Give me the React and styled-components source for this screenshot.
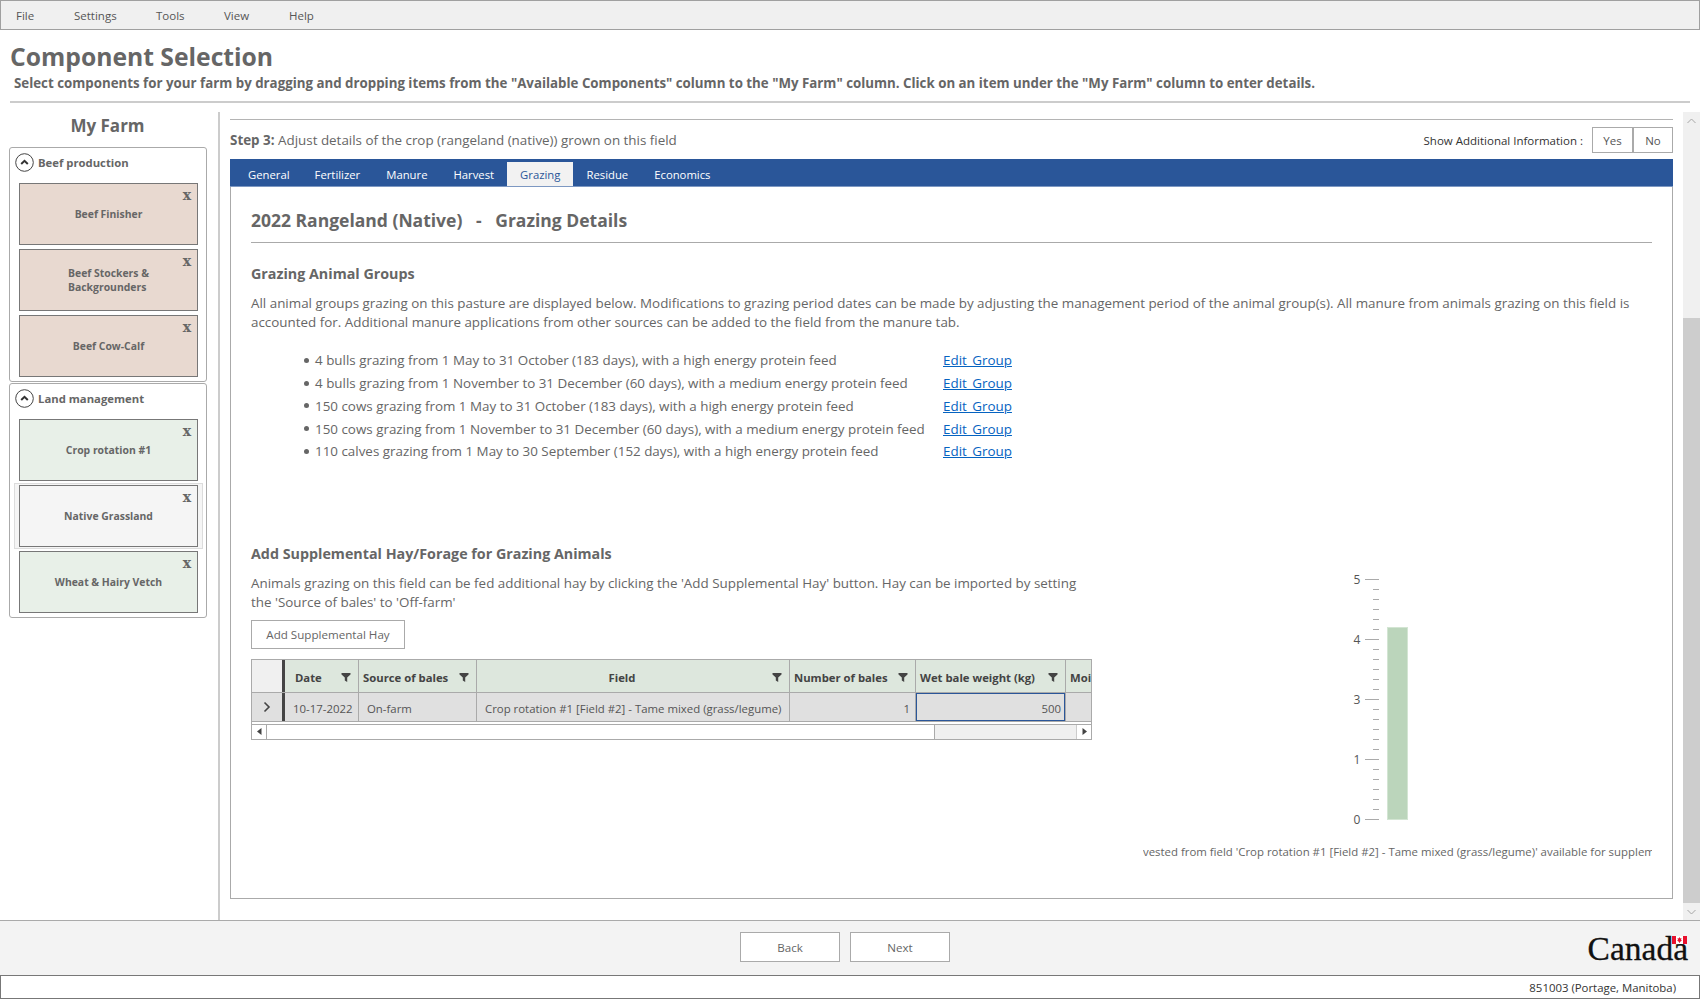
import React from 'react'
import styled, { createGlobalStyle } from 'styled-components'

const GlobalStyle = createGlobalStyle`
  html, body { margin: 0; padding: 0; background: #fff; }
  body { font-family: "Open Sans", "Noto Sans", sans-serif; color: #666; overflow: hidden; }
  * { box-sizing: border-box; }
`

const Page = styled.div`
  width: 1700px;
  height: 999px;
  display: flex;
  flex-direction: column;
  background: #fff;
`

const MenuBar = styled.div`
  height: 30px;
  flex: none;
  display: flex;
  align-items: center;
  background: #f0f0f0;
  border: 1px solid #a0a0a0;
  font-size: 11.5px;
  color: #555;
`
const MenuItem = styled.span`
  width: ${p => p.$w}px;
  &:first-child { margin-left: 15px; }
`

const Header = styled.div`
  height: 73px;
  flex: none;
  margin: 0 10px 9px;
  border-bottom: 2px solid #ccc;
  padding-top: 9px;
`
const Title = styled.h1`
  margin: 0;
  font-size: 24.7px;
  line-height: 35px;
  font-weight: 700;
  color: #666;
`
const Subtitle = styled.p`
  margin: 0 0 0 4px;
  font-size: 13.3px;
  line-height: 18px;
  font-weight: 700;
  color: #666;
  white-space: nowrap;
`

const Main = styled.div`
  height: 808px;
  flex: none;
  display: flex;
`

const Sidebar = styled.div`
  width: 220px;
  flex: none;
  border-right: 2px solid #ccc;
  padding-left: 9px;
`
const SideTitle = styled.h2`
  width: 197px;
  margin: 0;
  height: 35px;
  font-size: 17px;
  line-height: 27px;
  text-align: center;
  font-weight: 700;
  color: #666;
`
const Group = styled.div`
  width: 198px;
  border: 1px solid #aaa;
  border-radius: 3px;
  margin-bottom: 1px;
  padding: 5px 0 4px;
`
const GroupHead = styled.div`
  height: 19px;
  display: flex;
  align-items: center;
  gap: 4px;
  padding-left: 5px;
  margin-bottom: 11px;
  font-size: 11.3px;
  font-weight: 700;
  color: #666;
`
const CardList = styled.div`
  display: flex;
  flex-direction: column;
  gap: 4px;
  padding-left: 9px;
`
const CardHalo = styled.div`
  width: ${p => (p.$selected ? '189px' : '179px')};
  margin: ${p => (p.$selected ? '-2px 0 -2px -5px' : '0')};
  padding: ${p => (p.$selected ? '1px 4px' : '0')};
  background: ${p => (p.$selected ? '#f5f5f5' : 'transparent')};
  border: ${p => (p.$selected ? '1px solid #dcdcdc' : 'none')};
`
const Card = styled.div`
  position: relative;
  width: 179px;
  height: 62px;
  display: flex;
  align-items: center;
  justify-content: center;
  background: ${p => p.$bg};
  border: 1px solid #777;
  font-size: 10.4px;
  line-height: 14px;
  font-weight: 700;
  color: #666;
`
const CardClose = styled.span`
  position: absolute;
  top: 3px;
  right: 6px;
  font-family: "DejaVu Serif", serif;
  font-size: 14px;
  line-height: 16px;
  font-weight: 700;
  color: #666;
`

const Panel = styled.div`
  flex: 1;
  min-width: 0;
  padding: 7px 27px 0 10px;
  display: flex;
  flex-direction: column;
`
const TopRule = styled.div`
  height: 1px;
  background: #b4b4b4;
  flex: none;
`
const StepRow = styled.div`
  height: 39px;
  flex: none;
  display: flex;
  align-items: center;
  padding-top: 1px;
  font-size: 13.4px;
`
const StepText = styled.div`
  flex: 1;
  b { font-weight: 700; }
`
const InfoLabel = styled.span`
  font-size: 11.5px;
  color: #333;
  margin-right: 9px;
`
const ToggleBtn = styled.div`
  width: ${p => p.$w}px;
  height: 26px;
  display: flex;
  align-items: center;
  justify-content: center;
  border: 1px solid #aaa;
  font-size: 11.5px;
  color: #555;
`
const TabBar = styled.div`
  height: 28px;
  flex: none;
  display: flex;
  align-items: flex-end;
  background: #2a5699;
  padding-left: 6px;
  border-bottom: 1px solid #7d98c2;
`
const Tab = styled.div`
  height: 24px;
  padding: 0 ${p => p.$pad}px;
  display: flex;
  align-items: center;
  font-size: 11.3px;
  color: ${p => (p.$active ? '#2a5699' : '#fff')};
  background: ${p => (p.$active ? '#f2f2f2' : 'transparent')};
`
const ContentBox = styled.div`
  height: 712px;
  flex: none;
  border: 1px solid #aaa;
  border-top: none;
  padding: 18px 20px 0 20px;
`
const BoxTitle = styled.h3`
  margin: 0;
  height: 38px;
  border-bottom: 1px solid #aaa;
  font-size: 17.5px;
  line-height: 31px;
  font-weight: 700;
  color: #666;
  white-space: pre;
`
const SectionTitle = styled.h4`
  margin: ${p => p.$mt}px 0 0;
  font-size: 14.3px;
  line-height: 20px;
  font-weight: 700;
  color: #666;
`
const Para = styled.p`
  margin: ${p => p.$mt}px 0 0;
  width: ${p => p.$w};
  font-size: 13.4px;
  line-height: 19px;
  color: #666;
`
const GroupList = styled.ul`
  list-style: none;
  margin: 17px 0 0;
  padding: 0 0 0 53px;
`
const GroupRow = styled.li`
  height: 22.75px;
  display: flex;
  align-items: center;
  font-size: 13.4px;
  color: #666;
  &::before {
    content: '';
    width: 5px;
    height: 5px;
    border-radius: 50%;
    background: #666;
    margin-right: 6px;
    flex: none;
  }
`
const GroupText = styled.span`
  width: 628px;
  white-space: nowrap;
`
const EditLink = styled.a`
  color: #0563c1;
  text-decoration: underline;
  font-size: 13.4px;
  word-spacing: 2px;
`
const Lower = styled.div`
  display: grid;
  grid-template-columns: 841px 1fr;
`
const AddButton = styled.div`
  width: 154px;
  height: 29px;
  margin-top: 8px;
  display: flex;
  align-items: center;
  justify-content: center;
  border: 1px solid #aaa;
  font-size: 11.6px;
  color: #666;
`
const GridWrap = styled.div`
  width: 841px;
  height: 81px;
  margin-top: 10px;
  border: 1px solid #aaa;
  overflow: hidden;
`
const GridRow = styled.div`
  display: grid;
  grid-template-columns: 30px 3px 74px 118px 313px 126px 150px 26px;
  height: ${p => p.$h}px;
  border-bottom: 1px solid #aaa;
`
const HeadCell = styled.div`
  position: relative;
  display: flex;
  align-items: center;
  justify-content: ${p => p.$align || 'flex-start'};
  padding: 3px ${p => p.$pr || 0}px 0 ${p => p.$pl || 4}px;
  background: #dde7dd;
  border-right: ${p => (p.$last ? 'none' : '1px solid #aaa')};
  font-size: 11.3px;
  font-weight: 700;
  color: #444;
  white-space: nowrap;
  overflow: hidden;
`
const FunnelSlot = styled.span`
  position: absolute;
  right: ${p => p.$r || 7}px;
  top: 12px;
  display: flex;
`
const Corner = styled.div`
  background: ${p => p.$bg};
  display: flex;
  align-items: center;
  justify-content: center;
`
const BlackBar = styled.div`
  background: #444;
`
const BodyCell = styled.div`
  display: flex;
  align-items: center;
  justify-content: ${p => p.$align || 'flex-start'};
  padding: 3px ${p => p.$pr || 0}px 0 ${p => p.$pl || 0}px;
  background: #e0e0e0;
  border-right: ${p => (p.$last ? 'none' : '1px solid #aaa')};
  box-shadow: ${p => (p.$focus ? 'inset 0 0 0 1px #2a5699' : 'none')};
  font-size: 11.4px;
  color: #555;
  white-space: nowrap;
  overflow: hidden;
`
const HScroll = styled.div`
  height: 15px;
  margin-top: 2px;
  border-top: 1px solid #aaa;
  display: flex;
  background: #f0f0f0;
`
const ScrollArrow = styled.div`
  width: ${p => p.$w}px;
  flex: none;
  display: flex;
  align-items: center;
  justify-content: center;
  background: #fff;
  ${p => p.$right && 'border-left: 1px solid #ccc; margin-left: auto;'}
`
const ScrollThumb = styled.div`
  width: 669px;
  background: #fff;
  border: 1px solid #aaa;
  border-width: 0 1px;
`
const GaugeCol = styled.div`
  min-width: 0;
  padding-left: 51px;
  padding-top: 5px;
`
const GaugeSvg = styled.svg`
  display: block;
  margin-left: 206px;
`
const GaugeCaption = styled.div`
  margin-top: 13px;
  width: 509px;
  overflow: hidden;
  white-space: nowrap;
  font-size: 11.42px;
  line-height: 16px;
  color: #666;
`

const PageScroll = styled.div`
  position: absolute;
  left: 1683px;
  top: 112px;
  width: 17px;
  height: 808px;
  background: #f0f0f0;
`
const PageThumb = styled.div`
  position: absolute;
  top: 206px;
  left: 0;
  width: 17px;
  height: 585px;
  background: #cdcdcd;
`
const ArrowSlot = styled.div`
  position: absolute;
  left: 4px;
  ${p => (p.$bottom ? 'bottom: 5px;' : 'top: 6px;')}
  display: flex;
`

const Footer = styled.div`
  height: 55px;
  flex: none;
  position: relative;
  display: flex;
  justify-content: center;
  align-items: center;
  gap: 10px;
  background: #f3f3f3;
  border-top: 1px solid #aaa;
  padding: 0 10px 2px 0;
`
const NavButton = styled.div`
  width: 100px;
  height: 30px;
  display: flex;
  align-items: center;
  justify-content: center;
  background: #fff;
  border: 1px solid #aaa;
  font-size: 11.6px;
  color: #666;
`
const Wordmark = styled.div`
  position: absolute;
  right: 12px;
  top: 10px;
  font-family: "Liberation Serif", serif;
  font-size: 33.5px;
  line-height: 36px;
  color: #111;
  -webkit-text-stroke: 0.3px #111;
`
const FlagSvg = styled.svg`
  position: absolute;
  right: 1px;
  top: 5px;
`
const StatusBar = styled.div`
  height: 24px;
  flex: none;
  display: flex;
  align-items: center;
  justify-content: flex-end;
  padding-right: 23px;
  background: #fff;
  border: 1px solid #777;
  font-size: 11.4px;
  color: #333;
`

const CollapseIcon = () => (
  <svg width="19" height="19" viewBox="0 0 19 19">
    <circle cx="9.5" cy="9.5" r="8.8" fill="none" stroke="#444" strokeWidth="1" />
    <path d="M6.2 11 9.5 7.8 12.8 11" fill="none" stroke="#333" strokeWidth="2" />
  </svg>
)

const Funnel = () => (
  <svg width="10" height="10" viewBox="0 0 10 10">
    <path d="M0.5 1h9v1.4L6.2 5.4V10L3.8 8.6V5.4L0.5 2.4z" fill="#444" />
  </svg>
)

const Chevron = ({ up }) => (
  <svg width="9" height="6" viewBox="0 0 9 6">
    <path d={up ? 'M.5 5 4.5 1 8.5 5' : 'M.5 1 4.5 5 8.5 1'} fill="none" stroke="#a6a6a6" strokeWidth="1" />
  </svg>
)

const Gauge = () => {
  const labels = ['5', '4', '3', '1', '0']
  return (
    <GaugeSvg width="60" height="262" viewBox="0 0 60 262">
      {[...Array(25).keys()].map(i => {
        const y = 10.5 + i * 10
        const major = i % 6 === 0
        return <line key={i} x1={major ? 16 : 24} x2="30" y1={y} y2={y} stroke="#aaa" strokeWidth="1" />
      })}
      {labels.map((l, i) => (
        <text key={l} x="8" y={15 + i * 60} textAnchor="middle" fontSize="12" fill="#555" fontFamily="Open Sans, sans-serif">{l}</text>
      ))}
      <rect x="38.5" y="58.5" width="20" height="192" fill="#bbd5bb" stroke="#d3e5d3" strokeWidth="1" />
    </GaugeSvg>
  )
}

const beef = ['Beef Finisher', 'Beef Stockers &|Backgrounders', 'Beef Cow-Calf']
const land = [
  { name: 'Crop rotation #1', bg: '#e8f0e8' },
  { name: 'Native Grassland', bg: '#f5f5f5', selected: true },
  { name: 'Wheat & Hairy Vetch', bg: '#e8f0e8' },
]
const groups = [
  '4 bulls grazing from 1 May to 31 October (183 days), with a high energy protein feed',
  '4 bulls grazing from 1 November to 31 December (60 days), with a medium energy protein feed',
  '150 cows grazing from 1 May to 31 October (183 days), with a high energy protein feed',
  '150 cows grazing from 1 November to 31 December (60 days), with a medium energy protein feed',
  '110 calves grazing from 1 May to 30 September (152 days), with a high energy protein feed',
]
const tabs = [
  ['General', 12], ['Fertilizer', 13], ['Manure', 13], ['Harvest', 13],
  ['Grazing', 13, true], ['Residue', 13], ['Economics', 13],
]

export default function App() {
  return (
    <Page>
      <GlobalStyle />
      <MenuBar>
        <MenuItem $w={58}>File</MenuItem>
        <MenuItem $w={82}>Settings</MenuItem>
        <MenuItem $w={68}>Tools</MenuItem>
        <MenuItem $w={65}>View</MenuItem>
        <MenuItem $w={40}>Help</MenuItem>
      </MenuBar>
      <Header>
        <Title>Component Selection</Title>
        <Subtitle>Select components for your farm by dragging and dropping items from the "Available Components" column to the "My Farm" column. Click on an item under the "My Farm" column to enter details.</Subtitle>
      </Header>
      <Main>
        <Sidebar>
          <SideTitle>My Farm</SideTitle>
          <Group>
            <GroupHead><CollapseIcon />Beef production</GroupHead>
            <CardList>
              {beef.map(n => (
                <Card key={n} $bg="#e8d9d0">
                  <CardClose>x</CardClose>
                  <span>{n.split('|').map(s => <div key={s}>{s}</div>)}</span>
                </Card>
              ))}
            </CardList>
          </Group>
          <Group>
            <GroupHead><CollapseIcon />Land management</GroupHead>
            <CardList>
              {land.map(c => (
                <CardHalo key={c.name} $selected={c.selected}>
                  <Card $bg={c.bg}>
                    <CardClose>x</CardClose>
                    {c.name}
                  </Card>
                </CardHalo>
              ))}
            </CardList>
          </Group>
        </Sidebar>
        <Panel>
          <TopRule />
          <StepRow>
            <StepText><b>Step 3:</b> Adjust details of the crop (rangeland (native)) grown on this field</StepText>
            <InfoLabel>Show Additional Information :</InfoLabel>
            <ToggleBtn $w={41}>Yes</ToggleBtn>
            <ToggleBtn $w={40}>No</ToggleBtn>
          </StepRow>
          <TabBar>
            {tabs.map(([t, pad, active]) => <Tab key={t} $pad={pad} $active={active}>{t}</Tab>)}
          </TabBar>
          <ContentBox>
            <BoxTitle>2022 Rangeland (Native)   -   Grazing Details</BoxTitle>
            <SectionTitle $mt={21}>Grazing Animal Groups</SectionTitle>
            <Para $mt={10}>All animal groups grazing on this pasture are displayed below. Modifications to grazing period dates can be made by adjusting the management period of the animal group(s). All manure from animals grazing on this field is accounted for. Additional manure applications from other sources can be added to the field from the manure tab.</Para>
            <GroupList>
              {groups.map(g => (
                <GroupRow key={g}>
                  <GroupText>{g}</GroupText>
                  <EditLink href="#">Edit Group</EditLink>
                </GroupRow>
              ))}
            </GroupList>
            <SectionTitle $mt={81}>Add Supplemental Hay/Forage for Grazing Animals</SectionTitle>
            <Lower>
              <div>
                <Para $mt={10} $w="840px">Animals grazing on this field can be fed additional hay by clicking the 'Add Supplemental Hay' button. Hay can be imported by setting the 'Source of bales' to 'Off-farm'</Para>
                <AddButton>Add Supplemental Hay</AddButton>
                <GridWrap>
                  <GridRow $h={33}>
                    <Corner $bg="#f0f0f0" />
                    <BlackBar />
                    <HeadCell $pl={10}>Date<FunnelSlot><Funnel /></FunnelSlot></HeadCell>
                    <HeadCell>Source of bales<FunnelSlot><Funnel /></FunnelSlot></HeadCell>
                    <HeadCell $align="center" $pr={26}>Field<FunnelSlot><Funnel /></FunnelSlot></HeadCell>
                    <HeadCell>Number of bales<FunnelSlot><Funnel /></FunnelSlot></HeadCell>
                    <HeadCell>Wet bale weight (kg)<FunnelSlot><Funnel /></FunnelSlot></HeadCell>
                    <HeadCell $last>Moisture</HeadCell>
                  </GridRow>
                  <GridRow $h={29}>
                    <Corner $bg="#e0e0e0">
                      <svg width="8" height="12" viewBox="0 0 8 12">
                        <path d="M1.5 1.5 6 6 1.5 10.5" fill="none" stroke="#444" strokeWidth="1.6" />
                      </svg>
                    </Corner>
                    <BlackBar />
                    <BodyCell $pl={8}>10-17-2022</BodyCell>
                    <BodyCell $pl={8}>On-farm</BodyCell>
                    <BodyCell $pl={8}>Crop rotation #1 [Field #2] - Tame mixed (grass/legume)</BodyCell>
                    <BodyCell $align="flex-end" $pr={5}>1</BodyCell>
                    <BodyCell $align="flex-end" $pr={4} $focus>500</BodyCell>
                    <BodyCell $last />
                  </GridRow>
                  <HScroll>
                    <ScrollArrow $w={14}>
                      <svg width="5" height="7" viewBox="0 0 5 7"><path d="M4.5 0v7L0 3.5z" fill="#444" /></svg>
                    </ScrollArrow>
                    <ScrollThumb />
                    <ScrollArrow $w={15} $right>
                      <svg width="5" height="7" viewBox="0 0 5 7"><path d="M.5 0v7L5 3.5z" fill="#444" /></svg>
                    </ScrollArrow>
                  </HScroll>
                </GridWrap>
              </div>
              <GaugeCol>
                <Gauge />
                <GaugeCaption>vested from field 'Crop rotation #1 [Field #2] - Tame mixed (grass/legume)' available for supplem</GaugeCaption>
              </GaugeCol>
            </Lower>
          </ContentBox>
        </Panel>
      </Main>
      <PageScroll>
        <ArrowSlot><Chevron up /></ArrowSlot>
        <PageThumb />
        <ArrowSlot $bottom><Chevron /></ArrowSlot>
      </PageScroll>
      <Footer>
        <NavButton>Back</NavButton>
        <NavButton>Next</NavButton>
        <Wordmark>
          Canada
          <FlagSvg width="15" height="8" viewBox="0 0 15 8">
            <rect width="15" height="8" fill="#fff" />
            <rect width="4" height="8" fill="#e8112d" />
            <rect x="11" width="4" height="8" fill="#e8112d" />
            <path d="M7.5 1 8.3 2.4 9.5 2 9 4 10 4.2 8 6 7.7 7H7.3L7 6 5 4.2 6 4 5.5 2 6.7 2.4z" fill="#e8112d" />
          </FlagSvg>
        </Wordmark>
      </Footer>
      <StatusBar>851003 (Portage, Manitoba)</StatusBar>
    </Page>
  )
}
